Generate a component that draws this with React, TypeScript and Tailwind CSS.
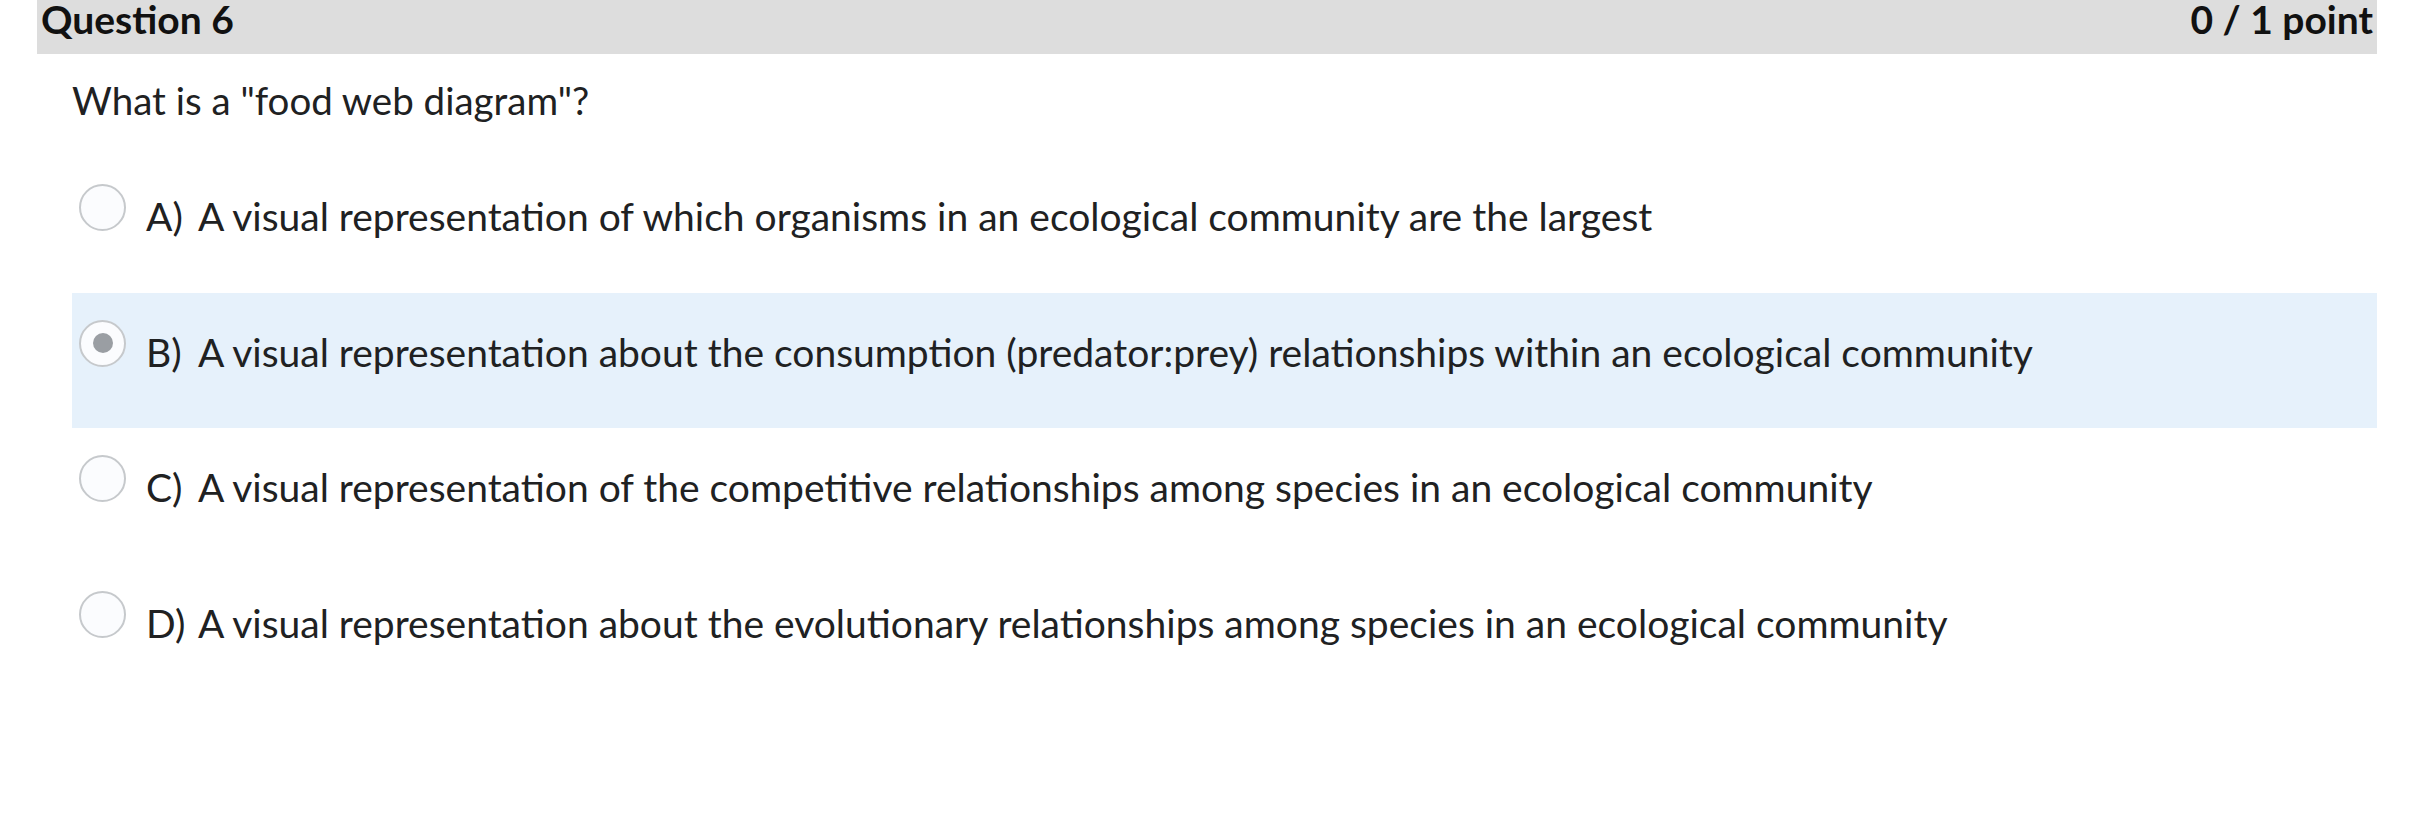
import React from "react";

const options = [
  { label: "A)", text: "A visual representation of which organisms in an ecological community are the largest", selected: false },
  { label: "B)", text: "A visual representation about the consumption (predator:prey) relationships within an ecological community", selected: true },
  { label: "C)", text: "A visual representation of the competitive relationships among species in an ecological community", selected: false },
  { label: "D)", text: "A visual representation about the evolutionary relationships among species in an ecological community", selected: false },
];

export default function App() {
  return (
    <div className="w-[2412px] h-[826px] bg-white font-['Lato','Liberation_Sans',sans-serif] text-[#202122]">
      <div className="ml-[37px] w-[2340px]">
        <div className="flex justify-between items-start bg-[#dddddd] h-[54px] pl-[4px] pr-[4px] text-[39px] leading-[38px] font-bold text-[#111111]">
          <span>Question 6</span>
          <span>0 / 1 point</span>
        </div>
        <div className="pl-[35px]">
          <div className="mt-[23px] text-[38.5px] leading-[47px]">What is a "food web diagram"?</div>
          <div className="mt-[33px] flex flex-col">
            {options.map((o) => (
              <div
                key={o.label}
                className={`flex items-start h-[135.5px] pt-[27px] pl-[7px] ${o.selected ? "bg-[#e6f1fb]" : ""}`}
              >
                <div className="w-[47px] h-[47px] shrink-0 rounded-full border-2 border-[#c6c9cc] bg-[#fbfcfe] flex items-center justify-center">
                  {o.selected && <div className="w-[20px] h-[20px] rounded-full bg-[#9a9ea3]" />}
                </div>
                <div className="flex mt-[9px] ml-[20px] text-[39px] leading-[47px]">
                  <span className="w-[52px] shrink-0">{o.label}</span>
                  <span>{o.text}</span>
                </div>
              </div>
            ))}
          </div>
        </div>
      </div>
    </div>
  );
}
